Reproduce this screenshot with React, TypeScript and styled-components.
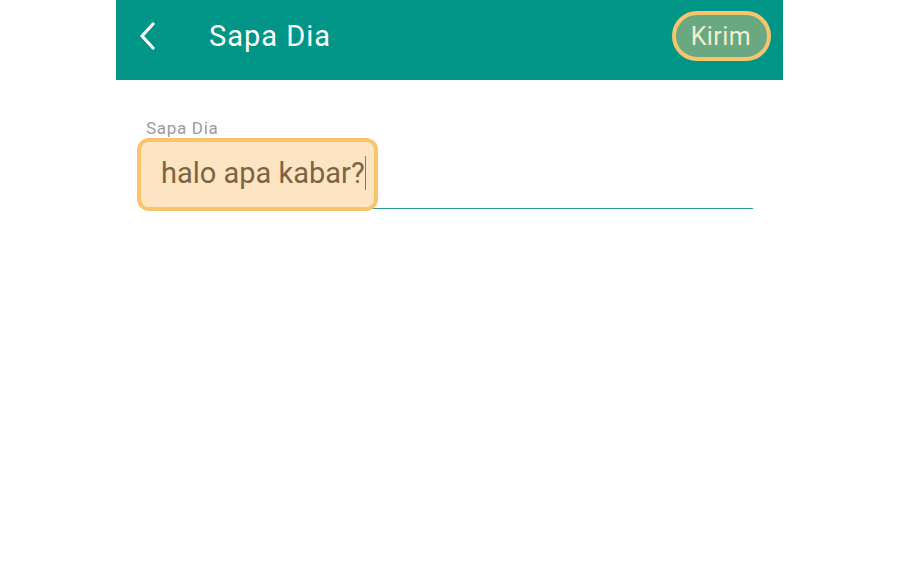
import styled, { createGlobalStyle } from "styled-components";

const GlobalStyle = createGlobalStyle`
  html, body {
    margin: 0;
    padding: 0;
    background: #fff;
  }
  body {
    font-family: Roboto, "Noto Sans", sans-serif;
  }
`;

const Page = styled.div`
  width: 900px;
  height: 568px;
  display: flex;
  justify-content: center;
  background: #fff;
`;

const Screen = styled.div`
  width: 667px;
  margin-left: -1px;
  display: flex;
  flex-direction: column;
`;

const Header = styled.div`
  height: 80px;
  box-sizing: border-box;
  background: #009587;
  display: flex;
  align-items: center;
  padding: 0 12px 8px 22px;
`;

const BackButton = styled.div`
  width: 24px;
  height: 30px;
  display: flex;
  align-items: center;
`;

const Title = styled.div`
  margin-left: 47px;
  flex: 1;
  color: #fff;
  font-size: 29px;
  letter-spacing: 1px;
`;

const SendButton = styled.div`
  position: relative;
  padding: 0 20px 0 19px;
  height: 50px;
  display: flex;
  align-items: center;
  color: #f1eed2;
  font-size: 25px;
  letter-spacing: 0.4px;
`;

const Highlight = styled.div<{ $radius: number; $fill: string }>`
  position: absolute;
  inset: 0;
  border: 4px solid #f8c46c;
  border-radius: ${(p) => p.$radius}px;
  background: ${(p) => p.$fill};
  z-index: 0;
`;

const Label = styled.span`
  position: relative;
  z-index: 1;
`;

const Body = styled.div`
  padding: 38px 30px 0 30px;
`;

const FieldLabel = styled.div`
  color: #9b9b9b;
  font-size: 17px;
  letter-spacing: 0.7px;
  line-height: 20px;
`;

const Field = styled.div`
  position: relative;
  height: 70px;
  border-bottom: 1.5px solid #2e9a90;
`;

const InputMark = styled.div`
  position: absolute;
  left: -9px;
  top: 0;
  width: 241px;
  height: 73px;
  display: flex;
  align-items: center;
  padding: 0 0 4px 24px;
  box-sizing: border-box;
  color: #7b6444;
  font-size: 29px;
`;

const Caret = styled.span`
  position: relative;
  z-index: 1;
  display: inline-block;
  width: 1px;
  height: 34px;
  margin-left: 0;
  background: #8a7556;
`;

export default function App() {
  return (
    <Page>
      <GlobalStyle />
      <Screen>
        <Header>
          <BackButton>
            <svg width="20" height="28" viewBox="0 0 20 28">
              <path
                d="M15 2 L4 14 L15 26"
                fill="none"
                stroke="#fff"
                strokeWidth="3.2"
                strokeLinecap="round"
                strokeLinejoin="round"
              />
            </svg>
          </BackButton>
          <Title>Sapa Dia</Title>
          <SendButton>
            <Highlight $radius={26} $fill="#69a880" />
            <Label>Kirim</Label>
          </SendButton>
        </Header>
        <Body>
          <FieldLabel>Sapa Dia</FieldLabel>
          <Field>
            <InputMark>
              <Highlight $radius={12} $fill="#fde5c4" />
              <Label>halo apa kabar?</Label>
              <Caret />
            </InputMark>
          </Field>
        </Body>
      </Screen>
    </Page>
  );
}
